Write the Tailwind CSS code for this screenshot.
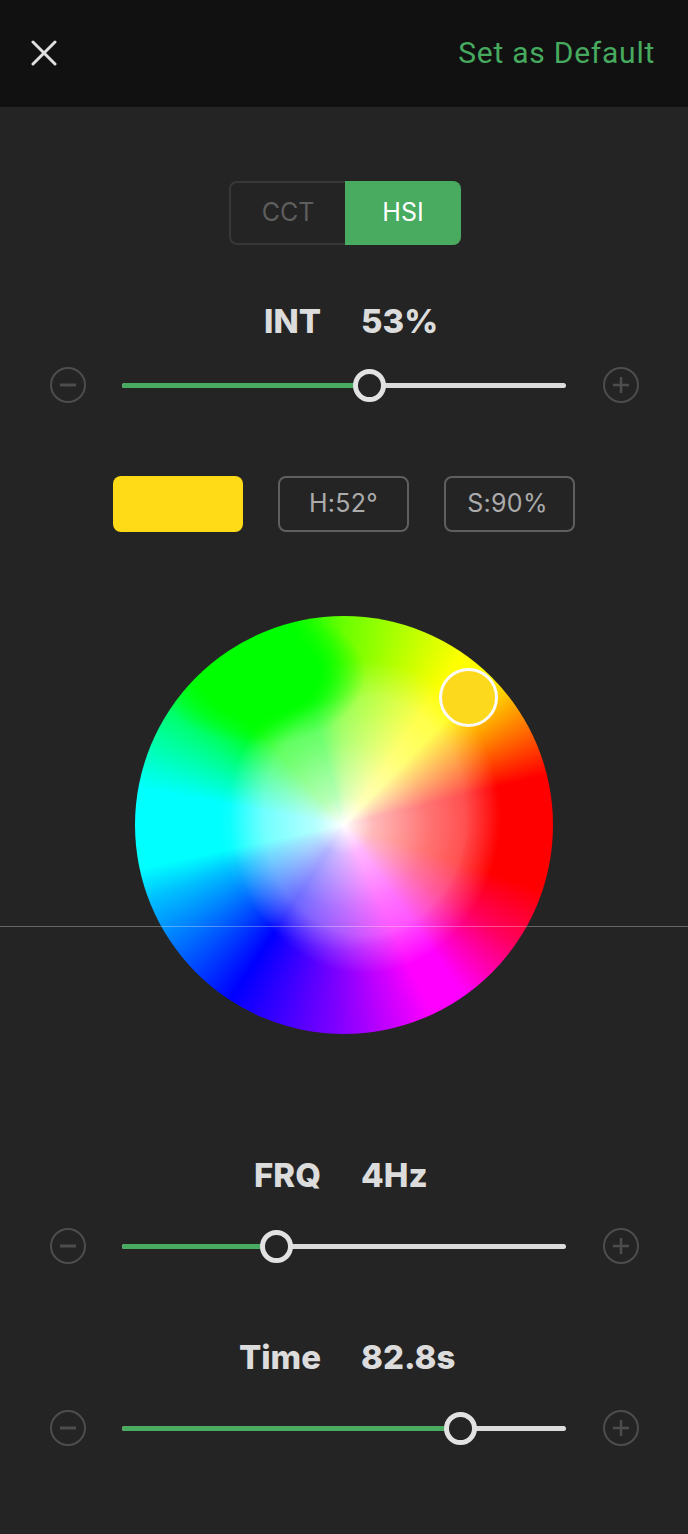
<!DOCTYPE html>
<html lang="en">
<head>
  <meta charset="UTF-8" />
  <meta name="viewport" content="width=device-width, initial-scale=1.0"/>
  <title>HSI Settings</title>
  <script src="https://cdn.jsdelivr.net/npm/@tailwindcss/browser@4"></script>
</head>
<body class="bg-[#242424] font-['Roboto',sans-serif]">
  <div class="relative w-[688px] h-[1534px] overflow-hidden">

    <!-- top bar -->
    <header class="h-[107px] bg-[#111111] flex items-center justify-between pl-[31px] pr-[33px]">
      <svg class="-mt-[2px]" width="26" height="26" viewBox="0 0 26 26" fill="none" stroke="#e0e0e0" stroke-width="3" stroke-linecap="round"><path d="M2 2l22 22M24 2L2 24"/></svg>
      <span class="-mt-[2px] text-[30px] leading-none text-[#46aa5f] tracking-[0.75px]">Set as Default</span>
    </header>

    <!-- mode switch -->
    <div class="mt-[74px] ml-[229px] w-[232px] h-[64px] flex rounded-[8px] border-2 border-[#383838] text-[25px] font-['Inter',sans-serif]">
      <div class="w-[114px] flex items-center justify-center text-[#5e5e5e]">CCT</div>
      <div class="flex-1 -my-[2px] -mr-[2px] rounded-r-[8px] bg-[#48ab60] flex items-center justify-center text-white">HSI</div>
    </div>

    <!-- INT -->
    <div class="mt-[57px] h-[40px] flex items-center text-[33px] font-extrabold text-[#dcdcdc] font-['Inter',sans-serif]">
      <span class="w-[321px] text-right">INT</span>
      <span class="ml-[40px]">53%</span>
    </div>
    <div class="mt-[23px] h-[40px] flex items-center pl-[50px]">
      <svg width="36" height="36" viewBox="0 0 36 36" fill="none" stroke="#4d4d4d" stroke-width="2"><circle cx="18" cy="18" r="17"/><path d="M10 18h16" stroke-width="3"/></svg>
      <div class="relative ml-[36px] w-[444px] h-[5px] rounded-full bg-[#dcdcdc]">
        <div class="h-full w-[247px] rounded-l-full bg-[#48ab60]"></div>
        <div class="absolute left-[231px] -top-[14px] w-[33px] h-[33px] rounded-full border-[5px] border-[#e2e2e2] bg-[#242424]"></div>
      </div>
      <svg class="ml-[37px]" width="36" height="36" viewBox="0 0 36 36" fill="none" stroke="#4d4d4d" stroke-width="2"><circle cx="18" cy="18" r="17"/><path d="M10 18h16M18 10v16" stroke-width="2.5"/></svg>
    </div>

    <!-- colour values -->
    <div class="mt-[71px] h-[56px] flex pl-[113px] text-[25px] tracking-[0.3px] text-[#ababab] font-['Inter',sans-serif]">
      <div class="w-[130px] rounded-[8px] bg-[#fedb16]"></div>
      <div class="ml-[35px] w-[131px] rounded-[8px] border-2 border-[#5f5f5f] flex items-center justify-center">H:52°</div>
      <div class="ml-[35px] w-[131px] rounded-[8px] border-2 border-[#5f5f5f] flex items-center justify-center pr-[4px]">S:90%</div>
    </div>

    <!-- colour wheel -->
    <div class="relative mt-[84px] ml-[135px] w-[418px] h-[418px] rounded-full bg-[radial-gradient(circle_closest-side,#ffffff_0%,rgba(255,255,255,0.55)_14%,rgba(255,255,255,0.18)_40%,rgba(255,255,255,0)_60%),radial-gradient(ellipse_105px_70px_at_30%_14%,#00ff00_55%,rgba(0,255,0,0)_100%),radial-gradient(ellipse_135px_157px_at_55%_48%,rgba(255,255,255,0.4)_0%,rgba(255,255,255,0.3)_75%,rgba(255,255,255,0)_100%),conic-gradient(#6aff00_0deg,#ffff00_35deg,#ffff00_44deg,#ff8000_60deg,#ff0000_76deg,#ff0000_108deg,#ff0060_125deg,#ff00ff_145deg,#ff00ff_155deg,#8000ff_182deg,#0000ff_213deg,#00c0ff_249deg,#00ffff_258deg,#00ffff_280deg,#00ff80_300deg,#00ff00_318deg,#00ff00_345deg,#6aff00_360deg)]">
      <div class="absolute left-[304px] top-[52px] w-[59px] h-[59px] rounded-full border-[3px] border-[#fafafa] bg-[#fcd91c]"></div>
    </div>

    <!-- FRQ -->
    <div class="mt-[122px] h-[40px] flex items-center text-[33px] font-extrabold text-[#dcdcdc] font-['Inter',sans-serif]">
      <span class="w-[321px] text-right">FRQ</span>
      <span class="ml-[40px]">4Hz</span>
    </div>
    <div class="mt-[30px] h-[40px] flex items-center pl-[50px]">
      <svg width="36" height="36" viewBox="0 0 36 36" fill="none" stroke="#4d4d4d" stroke-width="2"><circle cx="18" cy="18" r="17"/><path d="M10 18h16" stroke-width="3"/></svg>
      <div class="relative ml-[36px] w-[444px] h-[5px] rounded-full bg-[#dcdcdc]">
        <div class="h-full w-[154px] rounded-l-full bg-[#48ab60]"></div>
        <div class="absolute left-[138px] -top-[14px] w-[33px] h-[33px] rounded-full border-[5px] border-[#e2e2e2] bg-[#242424]"></div>
      </div>
      <svg class="ml-[37px]" width="36" height="36" viewBox="0 0 36 36" fill="none" stroke="#4d4d4d" stroke-width="2"><circle cx="18" cy="18" r="17"/><path d="M10 18h16M18 10v16" stroke-width="2.5"/></svg>
    </div>

    <!-- Time -->
    <div class="mt-[72px] h-[40px] flex items-center text-[33px] font-extrabold text-[#dcdcdc] font-['Inter',sans-serif]">
      <span class="w-[321px] text-right">Time</span>
      <span class="ml-[40px]">82.8s</span>
    </div>
    <div class="mt-[30px] h-[40px] flex items-center pl-[50px]">
      <svg width="36" height="36" viewBox="0 0 36 36" fill="none" stroke="#4d4d4d" stroke-width="2"><circle cx="18" cy="18" r="17"/><path d="M10 18h16" stroke-width="3"/></svg>
      <div class="relative ml-[36px] w-[444px] h-[5px] rounded-full bg-[#dcdcdc]">
        <div class="h-full w-[338px] rounded-l-full bg-[#48ab60]"></div>
        <div class="absolute left-[322px] -top-[14px] w-[33px] h-[33px] rounded-full border-[5px] border-[#e2e2e2] bg-[#242424]"></div>
      </div>
      <svg class="ml-[37px]" width="36" height="36" viewBox="0 0 36 36" fill="none" stroke="#4d4d4d" stroke-width="2"><circle cx="18" cy="18" r="17"/><path d="M10 18h16M18 10v16" stroke-width="2.5"/></svg>
    </div>

    <!-- thin line over the wheel -->
    <div class="absolute left-0 right-0 top-[926px] h-[1px] bg-white/30"></div>
  </div>
</body>
</html>
